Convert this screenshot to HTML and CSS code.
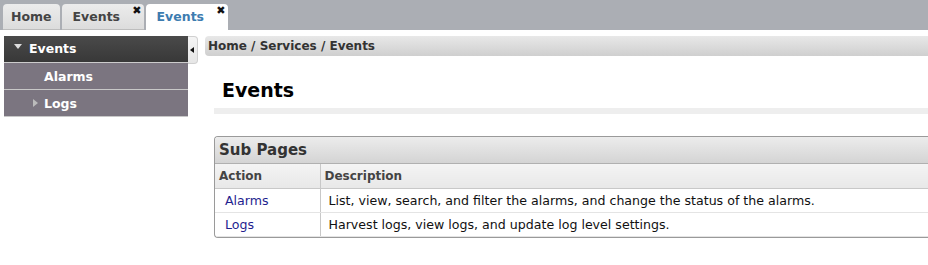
FILE: index.html
```html
<!DOCTYPE html>
<html>
<head>
<meta charset="utf-8">
<link rel="stylesheet" href="styles.css">
</head>
<body>
<div class="tabbar">
  <div class="tab">Home</div>
  <div class="tab closable">Events<span class="close">✖</span></div>
  <div class="tab closable active">Events<span class="close">✖</span></div>
</div>
<div class="main">
  <div class="sidebar">
    <div class="nav-head"><span class="tri-down"></span>Events</div>
    <div class="nav-item">Alarms</div>
    <div class="nav-item"><span class="tri-right"></span>Logs</div>
  </div>
  <div class="toggle"><span class="tri-left"></span></div>
  <div class="content">
    <div class="crumbs">Home / Services / Events</div>
    <div class="inner">
      <h1 class="title">Events</h1>
      <div class="rule"></div>
      <div class="panel">
        <div class="panel-head">Sub Pages</div>
        <table class="grid">
          <colgroup><col class="col1"><col></colgroup>
          <thead>
            <tr><th class="c1">Action</th><th>Description</th></tr>
          </thead>
          <tbody>
            <tr><td class="c1"><a href="#">Alarms</a></td><td>List, view, search, and filter the alarms, and change the status of the alarms.</td></tr>
            <tr><td class="c1"><a href="#">Logs</a></td><td>Harvest logs, view logs, and update log level settings.</td></tr>
          </tbody>
        </table>
      </div>
    </div>
  </div>
</div>
</body>
</html>
```
FILE: styles.css
```css
html, body {
  margin: 0;
  padding: 0;
  background: #fff;
  font-family: "DejaVu Sans", Verdana, sans-serif;
  overflow: hidden;
}
.tabbar {
  height: 30px;
  background: #abaeb4;
  display: flex;
  align-items: flex-end;
  padding-left: 3px;
  gap: 2px;
  box-sizing: border-box;
}
.tab {
  position: relative;
  height: 26px;
  box-sizing: border-box;
  padding: 0 8px;
  border-radius: 4px 4px 0 0;
  background: linear-gradient(#ececec, #dcdcdc);
  border-bottom: 1px solid #bdbdbd;
  color: #444;
  font-weight: bold;
  font-size: 12.5px;
  line-height: 26px;
}
.tab.closable {
  width: 82px;
  padding-left: 11px;
}
.tab.active {
  background: #fff;
  border-bottom: none;
  color: #3d7cb0;
}
.close {
  position: absolute;
  right: 2px;
  top: -6px;
  font-size: 11px;
  color: #111;
}
.main {
  display: flex;
  align-items: flex-start;
  padding-top: 6px;
}
.sidebar {
  width: 184px;
  margin-left: 4px;
  font-weight: bold;
  font-size: 12.5px;
  color: #fff;
}
.nav-head {
  height: 27px;
  line-height: 26px;
  background: linear-gradient(#4a4a4a, #383838);
  border-bottom: 1px solid #ccc;
  box-sizing: border-box;
  padding-left: 10px;
  display: flex;
  align-items: center;
}
.nav-item {
  height: 27px;
  box-sizing: border-box;
  background: #7b7580;
  border-bottom: 1px solid #c8c8c8;
  padding-left: 40px;
  display: flex;
  align-items: center;
  position: relative;
}
.tri-down {
  width: 0;
  height: 0;
  border-left: 4px solid transparent;
  border-right: 4px solid transparent;
  border-top: 5px solid #ddd;
  margin-right: 7px;
  margin-top: -5px;
}
.tri-right {
  position: absolute;
  left: 29px;
  top: 9px;
  width: 0;
  height: 0;
  border-top: 4px solid transparent;
  border-bottom: 4px solid transparent;
  border-left: 5px solid #bbb;
}
.toggle {
  width: 10px;
  height: 28px;
  box-sizing: border-box;
  background: linear-gradient(#f4f4f4, #e6e6e6);
  border: 1px solid #d0d0d0;
  border-left: none;
  border-radius: 0 4px 4px 0;
  display: flex;
  align-items: center;
  justify-content: center;
}
.tri-left {
  width: 0;
  height: 0;
  border-top: 3px solid transparent;
  border-bottom: 3px solid transparent;
  border-right: 4px solid #111;
  margin-left: -2px;
}
.content {
  flex: 1;
  margin-left: 7px;
}
.crumbs {
  height: 20px;
  line-height: 20px;
  background: linear-gradient(#e8e8e8, #cfcfcf);
  border-radius: 4px 0 0 4px;
  padding-left: 3px;
  font-size: 12px;
  font-weight: bold;
  color: #333;
}
.inner {
  padding-left: 9px;
}
.title {
  margin: 0;
  padding: 22px 0 0 8px;
  font-size: 19px;
  font-weight: bold;
  color: #000;
  line-height: 24px;
  height: 46px;
  box-sizing: border-box;
}
.rule {
  height: 6px;
  background: #eeeeee;
  margin-top: 6px;
}
.panel {
  margin-top: 22px;
  border: 1px solid #9a9a9a;
  border-right: none;
  border-radius: 4px 0 0 4px;
  overflow: hidden;
}
.panel-head {
  height: 26px;
  line-height: 26px;
  padding-left: 4px;
  background: linear-gradient(#ececec, #d4d4d4);
  border-bottom: 1px solid #b0b0b0;
  font-weight: bold;
  font-size: 15px;
  color: #333;
}
.grid {
  width: 100%;
  border-collapse: collapse;
  table-layout: fixed;
  font-size: 12px;
}
.col1 {
  width: 105px;
}
.grid th {
  text-align: left;
  height: 24px;
  padding: 0 4px;
  background: linear-gradient(#f4f4f4, #e8e8e8);
  border-bottom: 1px solid #c8c8c8;
  font-weight: bold;
  color: #444;
  white-space: nowrap;
}
.grid th.c1, .grid td.c1 {
  border-right: 1px solid #c8c8c8;
}
.grid td {
  height: 23px;
  padding: 0 8px;
  color: #111;
  border-bottom: 1px solid #e4e4e4;
  font-size: 12.6px;
  white-space: nowrap;
}
.grid td.c1 {
  padding-left: 10px;
}
.grid a {
  color: #1f1f8f;
  text-decoration: none;
}
```
